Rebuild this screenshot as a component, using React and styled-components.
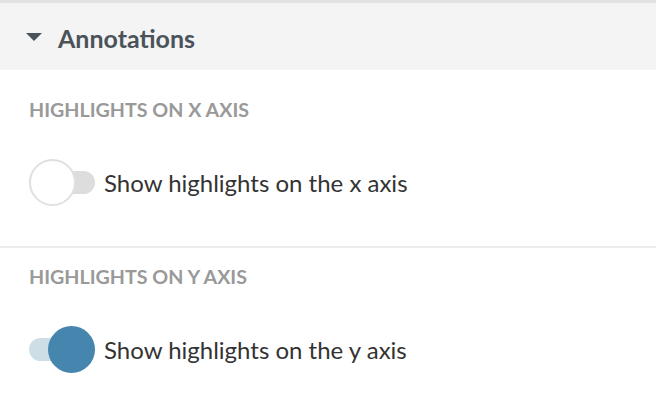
import React, { useState } from "react";
import styled, { createGlobalStyle } from "styled-components";

const Global = createGlobalStyle`
  html, body { margin: 0; padding: 0; background: #fff; }
  body { font-family: Lato, "Open Sans", sans-serif; }
`;

const Panel = styled.div`
  width: 656px;
  border-top: 3px solid #e2e2e2;
`;

const Header = styled.div`
  height: 67px;
  box-sizing: border-box;
  padding: 3px 0 0 26px;
  background: #f4f4f4;
  display: flex;
  align-items: center;
  gap: 16px;
  color: #4b535a;
  font-weight: 700;
  font-size: 25px;
`;

const Caret = styled.span`
  width: 0;
  height: 0;
  border-left: 8px solid transparent;
  border-right: 8px solid transparent;
  border-top: 8px solid #4b535a;
  margin-top: -3px;
`;

const Section = styled.div`
  padding: ${(p) => p.$top}px 0 0 29px;
  height: ${(p) => p.$height}px;
  box-sizing: border-box;
  border-bottom: ${(p) => (p.$divider ? "2px solid #ececec" : "none")};
`;

const Label = styled.div`
  font-size: 19.7px;
  font-weight: 700;
  color: #999;
  line-height: 22px;
`;

const Row = styled.label`
  display: flex;
  align-items: center;
  gap: 9px;
  margin-top: 38px;
  font-size: 24px;
  color: #333;
  cursor: pointer;
`;

const Switch = styled.span`
  position: relative;
  width: 66px;
  height: 47px;
  flex: none;
`;

const Track = styled.span`
  position: absolute;
  left: 0;
  right: 0;
  top: 12px;
  height: 23px;
  border-radius: 12px;
  background: ${(p) => (p.$on ? "#cddee6" : "#dddddd")};
`;

const Knob = styled.span`
  position: absolute;
  top: 0;
  left: ${(p) => (p.$on ? "19px" : "0")};
  width: 47px;
  height: 47px;
  border-radius: 50%;
  box-sizing: border-box;
  background: ${(p) => (p.$on ? "#4585ae" : "#fff")};
  border: ${(p) => (p.$on ? "none" : "2px solid #e0e0e0")};
`;

function Toggle({ on, onChange, children }) {
  return (
    <Row onClick={onChange}>
      <Switch>
        <Track $on={on} />
        <Knob $on={on} />
      </Switch>
      <span>{children}</span>
    </Row>
  );
}

export default function App() {
  const [x, setX] = useState(false);
  const [y, setY] = useState(true);
  return (
    <Panel>
      <Global />
      <Header>
        <Caret />
        <span>Annotations</span>
      </Header>
      <Section $top={29} $height={178} $divider>
        <Label>HIGHLIGHTS ON X AXIS</Label>
        <Toggle on={x} onChange={() => setX(!x)}>Show highlights on the x axis</Toggle>
      </Section>
      <Section $top={18} $height={166}>
        <Label>HIGHLIGHTS ON Y AXIS</Label>
        <Toggle on={y} onChange={() => setY(!y)}>Show highlights on the y axis</Toggle>
      </Section>
    </Panel>
  );
}
